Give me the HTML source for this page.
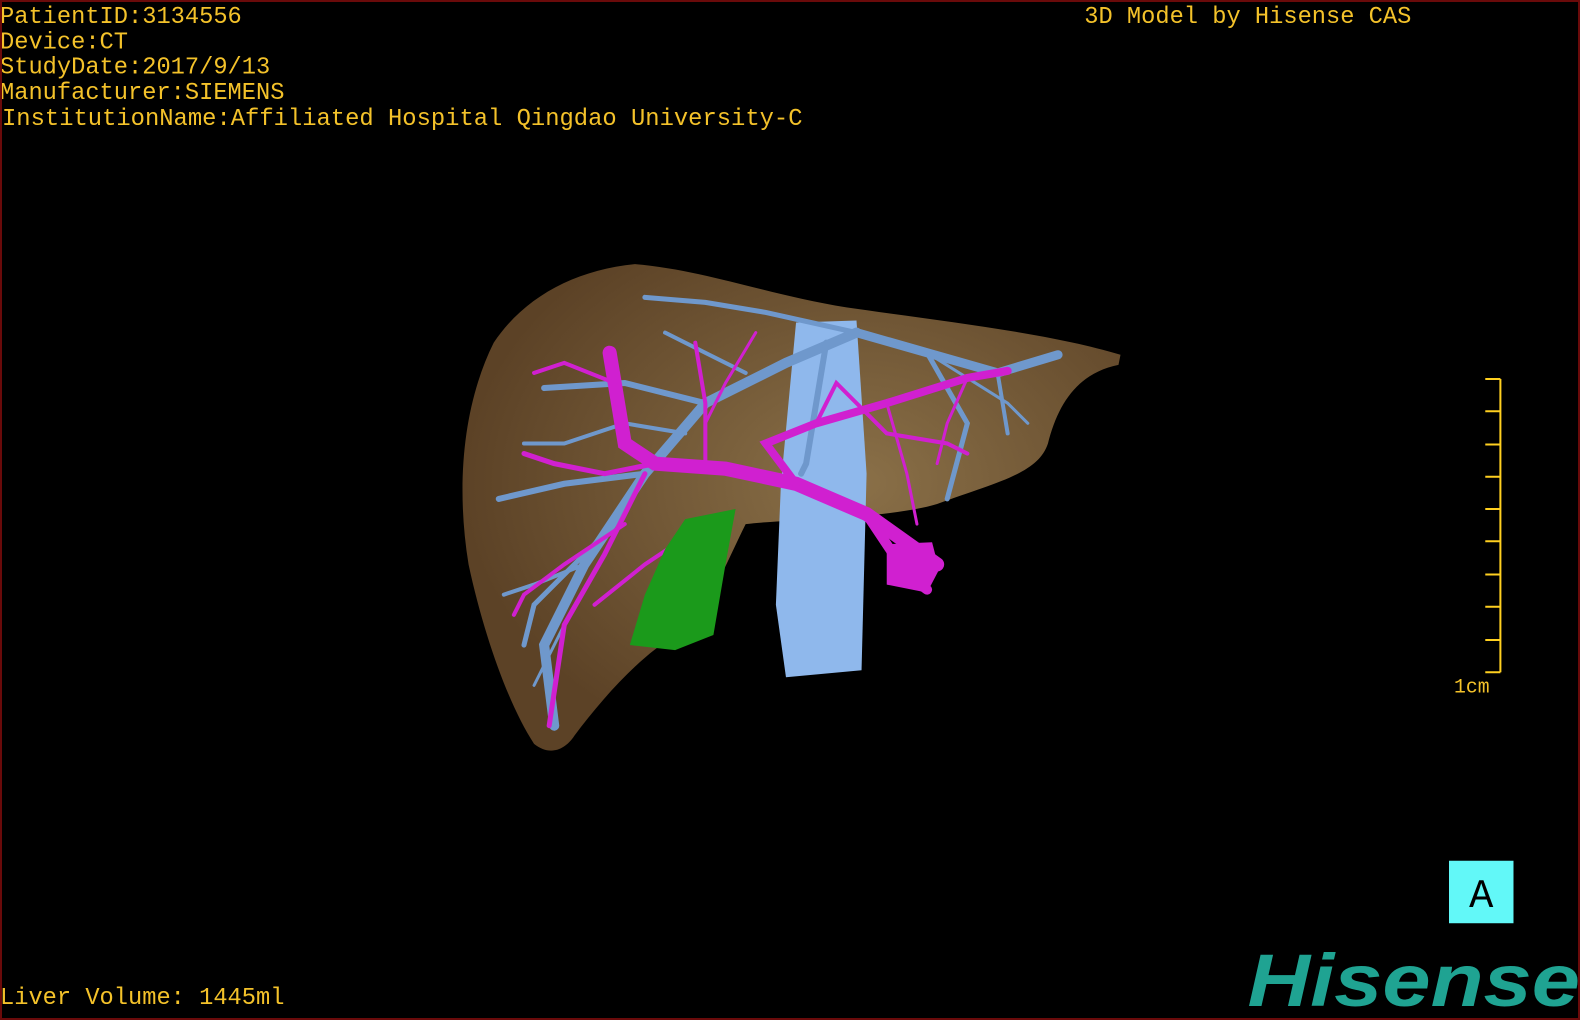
<!DOCTYPE html>
<html><head><meta charset="utf-8"><style>
html,body{margin:0;padding:0;background:#000;}
#o{position:relative;width:1580px;height:1020px;background:#000;overflow:hidden;}
#b{position:absolute;left:0;top:0;width:1580px;height:1020px;box-sizing:border-box;border:2px solid #6a0a0a;z-index:5;}
#c{position:absolute;left:0;top:0;width:1568px;height:1012px;transform:scale(1.00765,1.0079);transform-origin:0 0;}
.t{position:absolute;left:0;color:#f4c22a;font-family:"Liberation Mono",monospace;font-size:24px;line-height:25px;white-space:pre;transform:scaleX(0.98);transform-origin:left;}
</style></head><body><div id="o"><div id="b"></div><div id="c">
<div class="t" style="top:5px">PatientID:3134556</div>
<div class="t" style="top:30px">Device:CT</div>
<div class="t" style="top:55px">StudyDate:2017/9/13</div>
<div class="t" style="top:80px">Manufacturer:SIEMENS</div>
<div class="t" style="top:106px;left:2px;transform:scaleX(0.985)">InstitutionName:Affiliated Hospital Qingdao University-C</div>
<div class="t" style="top:5px;left:1076px;transform:scaleX(0.98)">3D Model by Hisense CAS</div>
<div class="t" style="top:978px;left:0">Liver Volume: 1445ml</div>
<div class="t" style="top:670px;left:1443px;font-size:20px">1cm</div>
<svg width="1568" height="1012" style="position:absolute;left:0;top:0">
<defs>
<radialGradient id="lg" cx="0.6" cy="0.45" r="0.6"><stop offset="0" stop-color="#8a7048"/><stop offset="1" stop-color="#5c4226"/></radialGradient>
</defs>
<path d="M630,262 C700,268 760,292 840,305 C930,318 1040,330 1112,352 L1110,362 C1070,370 1050,400 1040,440 C1030,470 990,478 930,500 C880,515 780,515 740,520 C720,560 705,600 680,625 C640,645 600,690 570,730 C560,745 545,750 530,738 C505,700 480,630 465,560 C452,480 460,400 490,340 C520,295 570,268 630,262 Z" fill="url(#lg)"/>
<path d="M790,320 L850,318 L860,470 L855,665 L780,672 L770,600 L775,480 Z" fill="#8fb8ec"/>
<g stroke="#6f98cc" fill="none" stroke-linecap="round">
<path d="M850,330 L780,360 L700,400 L640,470 L580,560 L540,640 L550,720" stroke-width="10"/>
<path d="M850,330 L920,350 L990,370 L1050,352" stroke-width="9"/>
<path d="M850,330 L760,310 L700,300 L640,295" stroke-width="5"/>
<path d="M700,400 L620,380 L540,385" stroke-width="6"/>
<path d="M640,470 L560,480 L495,495" stroke-width="6"/>
<path d="M920,350 L960,420 L940,495" stroke-width="5"/>
<path d="M820,340 L800,460 L795,470" stroke-width="6"/>
<path d="M600,530 L530,600 L520,640" stroke-width="5"/>
<path d="M740,370 L700,350 L660,330" stroke-width="4"/>
<path d="M990,370 L1000,430" stroke-width="4"/>
<path d="M680,430 L620,420 L560,440 L520,440" stroke-width="4"/>
<path d="M580,560 L530,580 L500,590" stroke-width="4"/>
<path d="M560,620 L530,680" stroke-width="3"/>
<path d="M920,350 L1000,400 L1020,420" stroke-width="3"/>
</g>
<g stroke="#d020d0" fill="none" stroke-linecap="round">
<path d="M930,560 L860,510 L790,480 L720,465 L650,460 L620,440 L610,380 L605,350" stroke-width="14"/>
<path d="M790,480 L760,440 L810,420 L880,400 L960,375 L1000,368" stroke-width="8"/>
<path d="M860,510 L900,570 L920,585" stroke-width="10"/>
<path d="M650,460 L600,470 L550,460 L520,450" stroke-width="5"/>
<path d="M640,470 L600,550 L560,620 L545,720" stroke-width="5"/>
<path d="M700,460 L700,400 L690,340" stroke-width="4"/>
<path d="M810,420 L830,380 L880,430 L940,440 L960,450" stroke-width="4"/>
<path d="M880,400 L900,470 L910,520" stroke-width="3"/>
<path d="M610,380 L560,360 L530,370" stroke-width="4"/>
<path d="M620,520 L560,560 L520,590 L510,610" stroke-width="4"/>
<path d="M700,520 L640,560 L590,600" stroke-width="4"/>
<path d="M750,330 L720,380 L700,420" stroke-width="3"/>
<path d="M960,375 L940,420 L930,460" stroke-width="3"/>
</g>
<path d="M680,515 L730,505 L720,560 L708,630 L670,645 L625,640 L640,590 L660,545 Z" fill="#1b9a1b"/>
<path d="M880,540 L925,538 L932,565 L920,588 L880,580 Z" fill="#d020d0"/>
<g stroke="#ffd020" stroke-width="2" fill="none">
<path d="M1489,376 V667"/>
<path d="M1474,376 H1489 M1474,408 H1489 M1474,441 H1489 M1474,473 H1489 M1474,505 H1489 M1474,537 H1489 M1474,570 H1489 M1474,602 H1489 M1474,635 H1489 M1474,667 H1489"/>
</g>
<rect x="1438" y="854" width="64" height="62" fill="#62f8f8"/>
<text x="1470" y="900" text-anchor="middle" font-family="Liberation Mono,monospace" font-size="40" fill="#000">A</text>
<text x="1238" y="998" font-family="Liberation Sans,sans-serif" font-weight="bold" font-style="italic" font-size="74" fill="#1fa392" textLength="330" lengthAdjust="spacingAndGlyphs">Hisense</text>
</svg>
</div></div></body></html>
